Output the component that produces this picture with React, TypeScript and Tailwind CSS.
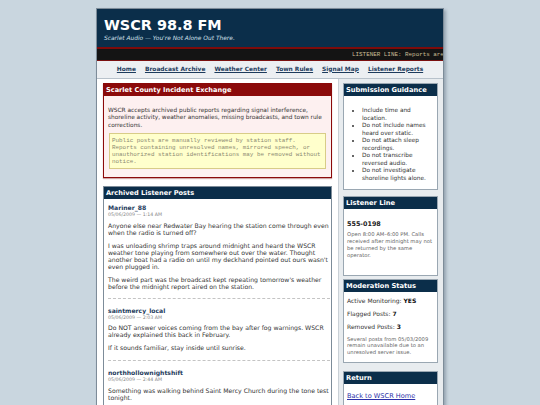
import React from "react";

const posts = [
  {
    name: "Mariner_88",
    date: "05/06/2009 — 1:14 AM",
    paras: [
      "Anyone else near Redwater Bay hearing the station come through even when the radio is turned off?",
      "I was unloading shrimp traps around midnight and heard the WSCR weather tone playing from somewhere out over the water. Thought another boat had a radio on until my deckhand pointed out ours wasn't even plugged in.",
      "The weird part was the broadcast kept repeating tomorrow's weather before the midnight report aired on the station.",
    ],
  },
  {
    name: "saintmercy_local",
    date: "05/06/2009 — 2:03 AM",
    paras: [
      "Do NOT answer voices coming from the bay after fog warnings. WSCR already explained this back in February.",
      "If it sounds familiar, stay inside until sunrise.",
    ],
  },
  {
    name: "northhollownightshift",
    date: "05/06/2009 — 2:44 AM",
    paras: [
      "Something was walking behind Saint Mercy Church during the tone test tonight.",
    ],
  },
];

const navLinks = [
  "Home",
  "Broadcast Archive",
  "Weather Center",
  "Town Rules",
  "Signal Map",
  "Listener Reports",
];

function SideHead({ children }: { children: React.ReactNode }) {
  return (
    <h3 className="h-[12px] bg-[#0b2e4a] px-[2px] text-[6.7px] font-bold leading-[12px] text-white">
      {children}
    </h3>
  );
}

export default function App() {
  return (
    <div className="h-[405px] overflow-hidden bg-[#c9d6df] pt-[8px] font-['DejaVu_Sans',Verdana,sans-serif] text-[#333] antialiased">
      <div className="mx-auto w-[348px] border border-[#7d8c99] bg-white shadow-[2px_2px_3px_rgba(30,50,70,0.3)]">
        {/* Header */}
        <header className="h-[40px] border-b-2 border-[#7d0b0b] bg-[#0b2e4a] px-[7px] pt-[9px]">
          <h1 className="text-[14.4px] font-bold leading-none text-white">WSCR 98.8 FM</h1>
          <p className="mt-[4px] text-[5.9px] italic leading-none text-[#d3e0ea]">
            Scarlet Audio — You're Not Alone Out There.
          </p>
        </header>

        {/* Ticker */}
        <div className="h-[12px] overflow-hidden whitespace-nowrap border-b border-[#7a1010] bg-[#141414] pl-[255px] font-['Liberation_Mono',monospace] text-[5.9px] leading-[11px] text-[#cbbf96]">
          LISTENER LINE: Reports are
        </div>

        {/* Nav */}
        <nav className="flex h-[18px] items-center justify-center gap-[9px] border-b border-[#b8c2cb] bg-[#eceff2]">
          {navLinks.map((l) => (
            <a key={l} href="#" className="text-[5.9px] font-bold leading-none text-[#1d3b5c] underline">
              {l}
            </a>
          ))}
        </nav>

        {/* Content */}
        <div className="flex">
          <main className="w-[241px] px-[6px] pt-[4px]">
            <section className="border border-[#8b0a0a] bg-[#fdf0f0] shadow-[0_1px_1px_rgba(120,0,0,0.35)]">
              <h2 className="h-[12px] bg-[#8b0a0a] px-[2px] text-[6.6px] font-bold leading-[12px] text-white">
                Scarlet County Incident Exchange
              </h2>
              <div className="pb-[8px] pl-[4px] pr-[1px] pt-[11px]">
                <p className="text-[5.85px] leading-[7.4px]">
                  WSCR accepts archived public reports regarding signal interference, shoreline activity, weather anomalies, missing broadcasts, and town rule corrections.
                </p>
                <div className="ml-[1px] mr-[4px] mt-[4px] border border-[#d8cc88] bg-[#ffffcc] px-[2px] py-[3px] font-['Liberation_Mono',monospace] text-[5.9px] leading-[7px] text-[#8c8a72]">
                  Public posts are manually reviewed by station staff.
                  <br />
                  Reports containing unresolved names, mirrored speech, or
                  <br />
                  unauthorized station identifications may be removed without
                  <br />
                  notice.
                </div>
              </div>
            </section>

            <section className="mt-[8px] border border-[#7d8c99] bg-white">
              <h2 className="h-[12px] bg-[#0b2e4a] px-[2px] text-[6.6px] font-bold leading-[12px] text-white">
                Archived Listener Posts
              </h2>
              <div className="pl-[4px] pr-[1px] pt-[5px]">
                {posts.map((p, i) => (
                  <article
                    key={p.name}
                    className={
                      i === 0
                        ? "border-b border-dashed border-[#c4c4c4] pb-[8px]"
                        : "border-b border-dashed border-[#c4c4c4] pb-[9px] pt-[8px]"
                    }
                  >
                    <div className="text-[6.1px] font-bold leading-[7px] text-[#1d3b5c]">{p.name}</div>
                    <div className="mt-[1px] text-[4.7px] leading-[6px] text-[#888]">{p.date}</div>
                    {p.paras.map((t, j) => (
                      <p
                        key={j}
                        className={
                          j === 0
                            ? "mt-[3.5px] text-[6.15px] leading-[7px]"
                            : "mt-[6px] text-[6.15px] leading-[7px]"
                        }
                      >
                        {t}
                      </p>
                    ))}
                  </article>
                ))}
              </div>
            </section>
          </main>

          <aside className="w-[105px] border-l border-[#c9d0d6] bg-[#e8ecef] pb-[10px] pl-[4px] pr-[5px] pt-[4px]">
            <section className="border border-[#9aa7b2] bg-white">
              <SideHead>Submission Guidance</SideHead>
              <div className="px-[3px] pb-[7px] pt-[11px]">
                <ul className="list-disc pl-[15px] text-[5.8px] leading-[7.5px]">
                  <li>Include time and location.</li>
                  <li>Do not include names heard over static.</li>
                  <li>Do not attach sleep recordings.</li>
                  <li>Do not transcribe reversed audio.</li>
                  <li>Do not investigate shoreline lights alone.</li>
                </ul>
              </div>
            </section>

            <section className="mt-[6px] border border-[#9aa7b2] bg-white">
              <SideHead>Listener Line</SideHead>
              <div className="px-[3px] pb-[16px] pt-[11px]">
                <div className="text-[6.4px] font-bold leading-[8px] text-[#222]">555-0198</div>
                <p className="mt-[3px] text-[5.25px] leading-[7px] text-[#666]">
                  Open 8:00 AM–6:00 PM. Calls received after midnight may not be returned by the same operator.
                </p>
              </div>
            </section>

            <section className="mt-[3px] border border-[#9aa7b2] bg-white">
              <SideHead>Moderation Status</SideHead>
              <div className="px-[3px] pb-[7px] pt-[5px] text-[6px] leading-[8px]">
                <p>
                  Active Monitoring: <b className="text-[#111]">YES</b>
                </p>
                <p className="mt-[5px]">
                  Flagged Posts: <b className="text-[#111]">7</b>
                </p>
                <p className="mt-[5px]">
                  Removed Posts: <b className="text-[#111]">3</b>
                </p>
                <p className="mt-[4.5px] text-[5.25px] leading-[6.5px] text-[#666]">
                  Several posts from 05/03/2009 remain unavailable due to an unresolved server issue.
                </p>
              </div>
            </section>

            <section className="mt-[8px] border border-[#9aa7b2] bg-white">
              <SideHead>Return</SideHead>
              <div className="px-[3px] pb-[8px] pt-[8px] text-[6.6px] leading-[8px]">
                <a href="#" className="block text-[#2b2fa8] underline">
                  Back to WSCR Home
                </a>
              </div>
            </section>
          </aside>
        </div>
      </div>
    </div>
  );
}
